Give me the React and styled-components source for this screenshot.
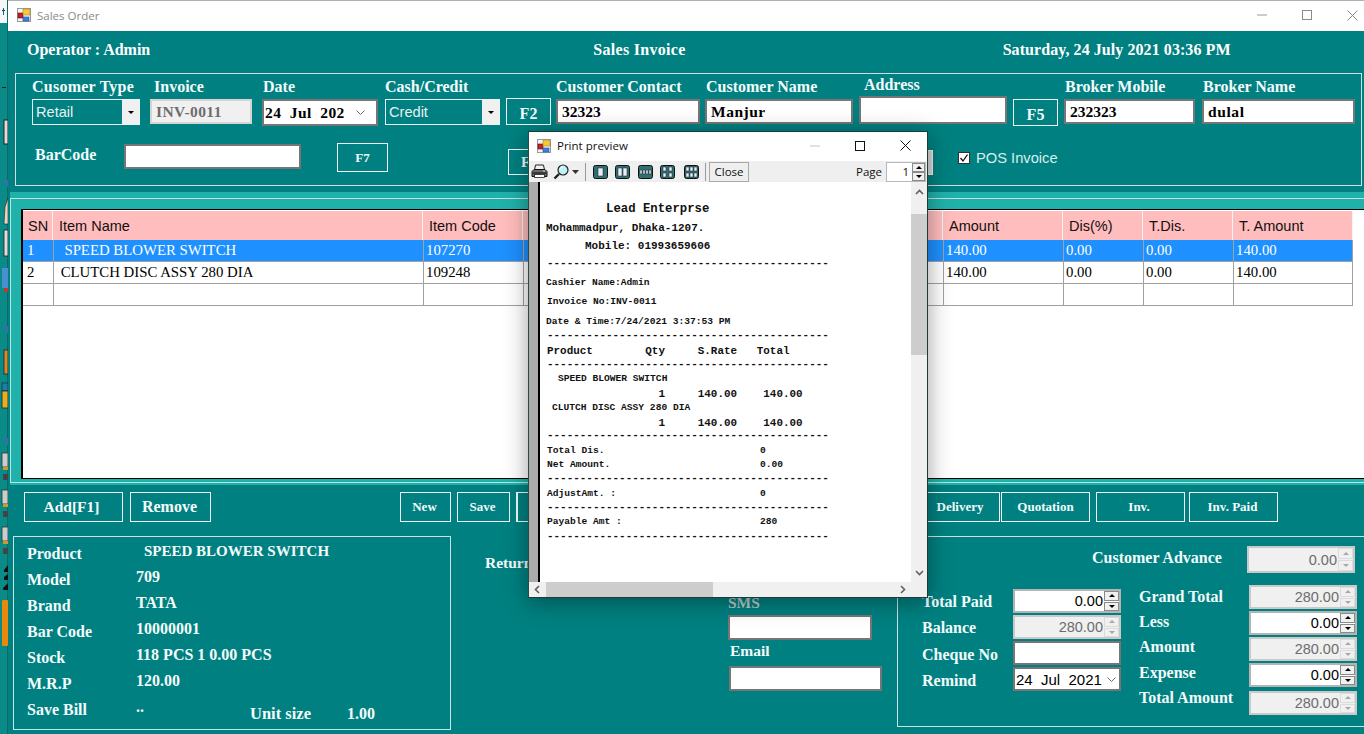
import React from 'react';
import styled, { createGlobalStyle } from 'styled-components';

const GlobalStyle = createGlobalStyle`
  html, body { margin: 0; padding: 0; background: #008080; }
  * { box-sizing: border-box; }
`;

const SERIF = '"Liberation Serif", "Times New Roman", serif';
const SANS = '"Liberation Sans", Arial, sans-serif';
const UI = '"Open Sans", "Noto Sans", sans-serif';
const MONO = '"Liberation Mono", "Courier New", monospace';

const Screen = styled.div`
  position: relative;
  display: flex;
  width: 1364px;
  height: 734px;
  overflow: hidden;
  background: #008080;
`;

const DesktopStrip = styled.svg`
  flex: none;
  width: 8px;
  height: 734px;
`;

const Window = styled.div`
  flex: 1;
  min-width: 0;
  display: flex;
  flex-direction: column;
  background: #008080;
`;

const TitleBar = styled.div`
  flex: none;
  display: flex;
  align-items: center;
  height: 31px;
  padding: 0 0 2px 9px;
  background: #fff;
  border-top: 1px solid #b0b0b0;
`;

const TitleText = styled.span`
  margin-left: ${p => p.$ml || 5}px;
  font: 11.5px ${UI};
  color: ${p => p.$dark ? '#111' : '#8a8a8a'};
`;

const WindowControls = styled.div`
  display: flex;
  align-items: center;
  margin-left: auto;
  gap: ${p => p.$gap}px;
  padding-right: ${p => p.$right}px;
`;

const HeaderRow = styled.div`
  flex: none;
  display: flex;
  align-items: center;
  height: 42px;
  padding-bottom: 5px;
  font: bold 16px ${SERIF};
  color: #fff;
`;

const HeaderText = styled.span`
  margin-left: ${p => p.$ml}px;
  letter-spacing: ${p => p.$ls || 0}px;
  white-space: nowrap;
`;

const TopPanel = styled.div`
  flex: none;
  width: 1347px;
  height: 113px;
  margin-left: 7px;
  border: 1px solid #d0dede;
`;

const FieldRow = styled.div`
  display: flex;
  align-items: flex-start;
  height: 52px;
`;

const SecondRow = styled.div`
  display: flex;
  align-items: flex-start;
  height: 32px;
  margin-top: 17px;
`;

const Field = styled.div`
  flex: none;
  width: ${p => p.$w}px;
  margin-left: ${p => p.$ml}px;
`;

const FieldLabel = styled.div`
  height: ${p => p.$h || 25}px;
  padding-left: ${p => p.$pl || 0}px;
  font: bold 16px/${p => p.$h || 25}px ${SERIF};
  letter-spacing: ${p => p.$ls || 0}px;
  color: #f2fbfb;
  white-space: nowrap;
`;

const InlineLabel = styled.div`
  flex: none;
  width: ${p => p.$w}px;
  height: 24px;
  margin-left: ${p => p.$ml}px;
  font: bold 16px/24px ${SERIF};
  color: #f2fbfb;
`;

const TextBox = styled.div`
  display: flex;
  align-items: center;
  flex: none;
  width: ${p => p.$w ? `${p.$w}px` : '100%'};
  height: ${p => p.$h || 25}px;
  margin: ${p => p.$mt || 0}px 0 0 ${p => p.$ml || 0}px;
  padding-left: ${p => p.$pl || 4}px;
  background: ${p => p.$disabled ? '#f0f0f0' : '#fff'};
  border: 2px solid ${p => p.$disabled ? '#d4d4d4' : '#767676'};
  color: ${p => p.$disabled ? '#6d6d6d' : '#000'};
  font: bold 15.5px ${SERIF};
  letter-spacing: ${p => p.$ls || 0}px;
  white-space: nowrap;
`;

const DateBox = styled(TextBox)`
  justify-content: space-between;
  padding: 0 ${p => p.$pr || 10}px 0 1px;
  font: ${p => p.$plain ? `15px ${SANS}` : `bold 15.5px ${SERIF}`};
  white-space: pre;
`;

const ComboBox = styled.div`
  display: flex;
  align-items: stretch;
  height: 26px;
  border: 1px solid #e8f5f5;
  background: #008080;
  color: #e6f2f2;
  font: 14.6px ${SANS};
`;

const ComboText = styled.div`
  flex: 1;
  display: flex;
  align-items: center;
  padding-left: 3px;
`;

const ComboArrow = styled.div`
  flex: none;
  display: flex;
  align-items: center;
  justify-content: center;
  width: 17px;
  background: #f0f0f0;
  &::after {
    content: '';
    border: 3px solid transparent;
    border-top: 3px solid #000;
    border-bottom: 0;
  }
`;

const OutlineButton = styled.div`
  flex: none;
  display: flex;
  align-items: center;
  justify-content: ${p => p.$pl ? 'flex-start' : 'center'};
  align-self: ${p => p.$end ? 'flex-end' : 'auto'};
  width: ${p => p.$w}px;
  height: ${p => p.$h}px;
  margin-left: ${p => p.$ml || 0}px;
  border: 1px solid #f0fafa;
  border-left-width: ${p => p.$thick ? 2 : 1}px;
  color: #f4fbfb;
  font: bold ${p => p.$size || 13}px ${SERIF};
  padding: ${p => p.$pt || 0}px ${p => p.$pr || 0}px 0 ${p => p.$pl || 0}px;
  white-space: nowrap;
`;

const HiddenGrayButton = styled.div`
  flex: none;
  align-self: flex-end;
  width: 50px;
  height: 25px;
  margin-left: 325px;
  background: #d9d9d9;
  border: 1px solid #eee;
`;

const CheckLabel = styled.label`
  display: flex;
  align-items: center;
  gap: 6px;
  height: 29px;
  margin-left: 25px;
  font: 14.7px ${SANS};
  color: #d9eeee;
`;

const CheckMark = styled.span`
  display: flex;
  align-items: center;
  justify-content: center;
  width: 12px;
  height: 12px;
  background: #fff;
  border: 1px solid #333;
`;

const LightStrip = styled.div`
  flex: none;
  height: 293px;
  margin: 6px 0 0 2px;
  padding-top: 6px;
  background: #20b2aa;
`;

const StripInner = styled.div`
  height: 285px;
  padding: 10px 0 0 10px;
  border-top: 1px solid #b8e6e2;
  border-left: 1px solid #b8e6e2;
  border-bottom: 1px solid #b8e6e2;
`;

const Grid = styled.div`
  height: 270px;
  padding-top: 1px;
  background: #fff;
  border: 1px solid #000;
  border-width: 1px 0 1px 2px;
  overflow: hidden;
`;

const COLUMNS = '30px 370px 100px 420px 120px 80px 90px 120px';

const HeadRow = styled.div`
  display: grid;
  grid-template-columns: ${COLUMNS};
  width: 1330px;
  height: 29px;
  background: #ffbdbd;
  font: 14.5px ${SANS};
  color: #111;
`;

const HeadCell = styled.div`
  display: flex;
  align-items: center;
  padding-left: ${p => p.$pl || 6}px;
  border-right: 1px solid #f4f4f4;
  white-space: nowrap;
`;

const DataRow = styled.div`
  display: grid;
  grid-template-columns: ${COLUMNS};
  width: 1330px;
  height: 22px;
  background: ${p => p.$selected ? '#1e90ff' : '#fff'};
  color: ${p => p.$selected ? '#fff' : '#000'};
  border-bottom: 1px solid #a0a0a0;
  border-right: 1px solid #a0a0a0;
  font: 14.8px ${SERIF};
`;

const DataCell = styled.div`
  display: flex;
  align-items: center;
  padding-left: ${p => p.$pl}px;
  border-left: ${p => p.$first ? 0 : 1}px solid #a0a0a0;
  white-space: pre;
`;

const ButtonRow = styled.div`
  flex: none;
  display: flex;
  align-items: flex-start;
  height: 44px;
  margin-top: 7px;
`;

const BottomArea = styled.div`
  flex: 1;
  display: flex;
  align-items: flex-start;
  min-height: 0;
`;

const ProductPanel = styled.div`
  flex: none;
  width: 438px;
  height: 194px;
  margin-left: 5px;
  padding: 3px 0 0 13px;
  border: 1px solid #c8e4e4;
`;

const InfoRow = styled.div`
  display: flex;
  height: 26px;
  font: bold 16px ${SERIF};
  color: #f4fbfb;
  white-space: nowrap;
`;

const InfoLabel = styled.div`
  flex: none;
  width: 109px;
  line-height: 28px;
`;

const InfoValue = styled.div`
  flex: none;
  width: ${p => p.$w ? `${p.$w}px` : 'auto'};
  margin-left: ${p => p.$ml || 0}px;
  font-size: ${p => p.$size || 16}px;
  line-height: 22px;
`;

const UnitText = styled.div`
  flex: none;
  width: ${p => p.$w ? `${p.$w}px` : 'auto'};
  font-size: ${p => p.$size || 16}px;
  line-height: 36px;
`;

const MiddleColumn = styled.div`
  flex: none;
  width: 446px;
  display: flex;
  flex-direction: column;
  padding-top: 18px;
`;

const MiddleLabel = styled.div`
  height: ${p => p.$h}px;
  margin: ${p => p.$mt || 0}px 0 0 ${p => p.$ml}px;
  font: bold 15.5px/${p => p.$h}px ${SERIF};
  color: ${p => p.$dim ? '#b5cccc' : '#f4fbfb'};
`;

const TotalsPanel = styled.div`
  flex: none;
  width: 480px;
  height: 191px;
  padding-top: 9px;
  border: 1px solid #c8e4e4;
`;

const AdvanceRow = styled.div`
  display: flex;
  align-items: center;
  padding-left: 194px;
`;

const TotalsColumns = styled.div`
  display: flex;
  align-items: flex-start;
  margin-top: 12px;
`;

const TotalsColumn = styled.div`
  display: flex;
  flex-direction: column;
  margin: ${p => p.$mt || 0}px 0 0 ${p => p.$ml}px;
`;

const TotalsRow = styled.div`
  display: flex;
  align-items: center;
  height: 24px;
  margin-bottom: ${p => p.$mb ?? 2}px;
`;

const TotalsLabel = styled.div`
  flex: none;
  width: ${p => p.$w}px;
  padding: ${p => p.$drop || 0}px 0 ${p => p.$lift || 0}px 0;
  font: bold 16px ${SERIF};
  color: #f2fbfb;
  white-space: nowrap;
`;

const SpinBox = styled.div`
  flex: none;
  display: flex;
  width: 108px;
  height: ${p => p.$h || 24}px;
  background: ${p => p.$disabled ? '#f0f0f0' : '#fff'};
  border: 2px solid ${p => p.$disabled ? '#c9c9c9' : '#b4b4b4'};
  color: ${p => p.$disabled ? '#6d6d6d' : '#000'};
`;

const SpinValue = styled.div`
  flex: 1;
  display: flex;
  align-items: center;
  justify-content: flex-end;
  padding-right: 1px;
  font: 14.5px ${SANS};
`;

const SpinButtons = styled.div`
  flex: none;
  width: 15px;
  display: flex;
  flex-direction: column;
  gap: 1px;
`;

const SpinArrow = styled.div`
  flex: 1;
  display: flex;
  align-items: center;
  justify-content: center;
  background: #f0f0f0;
  border: 1px solid ${p => p.$disabled ? '#dcdcdc' : '#8a8a8a'};
  &::after {
    content: '';
    border: 3px solid transparent;
    border-bottom: 3px solid ${p => p.$disabled ? '#a8a8a8' : '#000'};
    border-top: 0;
    transform: ${p => p.$down ? 'rotate(180deg)' : 'none'};
  }
`;

// print preview sits on top of the order form
const PreviewDialog = styled.div`
  position: absolute;
  left: 528px;
  top: 131px;
  width: 400px;
  height: 467px;
  display: flex;
  flex-direction: column;
  background: #f0f0f0;
  border: 1px solid #1c3c3c;
  border-left-color: #2a4a4a;
  box-shadow: 0 4px 22px rgba(0, 0, 0, 0.38);
`;

const PreviewTitle = styled.div`
  flex: none;
  display: flex;
  align-items: center;
  height: 29px;
  padding: 0 0 2px 8px;
  background: #fff;
`;

const PreviewToolbar = styled.div`
  flex: none;
  display: flex;
  align-items: center;
  height: 21px;
  padding-left: 2px;
  background: #efefef;
`;

const ToolIcon = styled.svg`
  flex: none;
  display: block;
  margin-left: ${p => p.$ml || 0}px;
`;

const ToolSeparator = styled.span`
  flex: none;
  width: 1px;
  height: 18px;
  margin-left: ${p => p.$ml}px;
  background: #9a9a9a;
`;

const CloseButton = styled.div`
  flex: none;
  width: 40px;
  height: 20px;
  margin-left: 3px;
  border: 1px solid #a8a8a8;
  font: 11.5px/18px ${UI};
  color: #111;
  text-align: center;
`;

const PageText = styled.span`
  margin-left: auto;
  font: 11.5px ${UI};
  color: #111;
`;

const PageSpin = styled.div`
  flex: none;
  display: flex;
  width: 40px;
  height: 20px;
  margin: 0 1px 0 4px;
  background: #fff;
  border: 1px solid #b8b8b8;
  font: 11.5px/18px ${UI};
  color: #111;
`;

const PageNumber = styled.span`
  flex: 1;
  padding-right: 3px;
  text-align: right;
`;

const PageSpinButtons = styled.div`
  flex: none;
  width: 13px;
  display: flex;
  flex-direction: column;
`;

const PreviewBody = styled.div`
  flex: 1;
  min-height: 0;
  display: flex;
`;

const PreviewGutter = styled.div`
  flex: none;
  width: 9px;
  background: #ababab;
`;

const PreviewPage = styled.div`
  flex: 1;
  min-width: 0;
  background: #fff;
  border-left: 2px solid #000;
  overflow: hidden;
  padding-top: 21px;
`;

const ReceiptLine = styled.div`
  height: 12px;
  margin-top: ${p => p.$gap}px;
  padding-left: ${p => p.$x}px;
  font: bold ${p => p.$size}px/12px ${MONO};
  color: #111;
  white-space: pre;
`;

const VScroll = styled.div`
  flex: none;
  width: 16px;
  display: flex;
  flex-direction: column;
  align-items: center;
  background: #f0f0f0;
`;

const VThumb = styled.div`
  width: 100%;
  height: 141px;
  margin-top: 19px;
  background: #cdcdcd;
`;

const ScrollIcon = styled.svg`
  flex: none;
  display: block;
  margin-top: ${p => p.$mt || 0}px;
  margin-left: ${p => p.$ml || 0}px;
`;

const HScroll = styled.div`
  flex: none;
  display: flex;
  align-items: center;
  height: 15px;
  background: #f0f0f0;
`;

const HThumb = styled.div`
  flex: none;
  width: 167px;
  height: 100%;
  margin-left: 6px;
  background: #cdcdcd;
`;

const AppIcon = ({ size = 14 }) => (
  <svg width={size} height={size} viewBox="0 0 14 14" style={{ flex: 'none' }}>
    <rect x="0.5" y="0.5" width="13" height="13" fill="#f4f4f4" stroke="#9a9a9a" />
    <rect x="1" y="5" width="5" height="5" fill="#c62020" stroke="#601010" strokeWidth="0.6" />
    <rect x="6" y="1" width="7" height="6" fill="#f6c83c" stroke="#a88420" strokeWidth="0.6" />
    <rect x="6" y="9" width="6" height="4" fill="#3f7fe0" stroke="#2050a0" strokeWidth="0.6" />
  </svg>
);

const MinIcon = ({ color }) => (
  <svg width="10" height="2" viewBox="0 0 10 2" style={{ display: 'block' }}><rect y="0.5" width="10" height="1" fill={color} /></svg>
);
const MaxIcon = ({ color }) => (
  <svg width="10" height="10" viewBox="0 0 10 10" style={{ display: 'block' }}><rect x="0.5" y="0.5" width="9" height="9" fill="none" stroke={color} /></svg>
);
const XIcon = ({ color }) => (
  <svg width="11" height="11" viewBox="0 0 11 11" style={{ display: 'block' }}><path d="M0.5 0.5 L10.5 10.5 M10.5 0.5 L0.5 10.5" stroke={color} fill="none" /></svg>
);

const Chevron = () => (
  <svg width="9" height="5" viewBox="0 0 9 5" style={{ flex: 'none' }}><path d="M0.5 0.5 L4.5 4.5 L8.5 0.5" fill="none" stroke="#6a6a6a" /></svg>
);

const PrinterIcon = () => (
  <ToolIcon width="17" height="15" viewBox="0 0 17 15">
    <path d="M4.5 1 H12.5 L13.5 6 H3.5 Z" fill="#f0f0f0" stroke="#222" />
    <path d="M1 7.5 L3 5.5 H14 L16 7.5 V12.5 H1 Z" fill="#6c6c6c" stroke="#111" />
    <rect x="1.5" y="8" width="14" height="2" fill="#3a3a3a" />
    <rect x="3.5" y="10.5" width="10" height="3" fill="#fff" stroke="#222" strokeWidth="0.8" />
    <rect x="12" y="6.5" width="2" height="1" fill="#d8d8d8" />
  </ToolIcon>
);

const ZoomIcon = () => (
  <ToolIcon $ml={5} width="16" height="16" viewBox="0 0 16 16">
    <circle cx="10" cy="6" r="5" fill="#bdf2f6" stroke="#222" strokeWidth="1.2" />
    <path d="M6 10 L1.5 14.5" stroke="#222" strokeWidth="2.4" />
    <path d="M7 5 A3 3 0 0 1 10 3" stroke="#fff" fill="none" />
  </ToolIcon>
);

const Caret = () => (
  <ToolIcon $ml={3} width="7" height="4" viewBox="0 0 7 4"><path d="M0 0 H7 L3.5 4 Z" fill="#333" /></ToolIcon>
);

// page layout buttons, the rects are the little white pages
const LayoutIcon = ({ pages, ml }) => (
  <ToolIcon $ml={ml} width="15" height="14" viewBox="0 0 15 14">
    <rect x="0.5" y="0.5" width="14" height="13" rx="2" fill="#2f6f6f" stroke="#111" />
    {pages.map(([x, y, w, h], i) => (
      <rect key={i} x={x} y={y} width={w} height={h} fill="#e8eef4" stroke="#223" strokeWidth="0.5" />
    ))}
  </ToolIcon>
);

const PAGE_LAYOUTS = [
  { ml: 7, pages: [[5, 3, 5, 8]] },
  { ml: 7, pages: [[3, 3, 4, 8], [8, 3, 4, 8]] },
  { ml: 8, pages: [[2, 5, 2, 4], [5, 5, 2, 4], [8, 5, 2, 4], [11, 5, 2, 4]] },
  { ml: 7, pages: [[3, 2, 3, 4], [9, 2, 3, 4], [3, 8, 3, 4], [9, 8, 3, 4]] },
  { ml: 9, pages: [[2, 2, 3, 4], [6, 2, 3, 4], [10, 2, 3, 4], [2, 8, 3, 4], [6, 8, 3, 4], [10, 8, 3, 4]] },
];

const Spin = ({ value, disabled, h }) => (
  <SpinBox $disabled={disabled} $h={h}>
    <SpinValue>{value}</SpinValue>
    <SpinButtons>
      <SpinArrow $disabled={disabled} />
      <SpinArrow $disabled={disabled} $down />
    </SpinButtons>
  </SpinBox>
);

const Combo = ({ text }) => (
  <ComboBox>
    <ComboText>{text}</ComboText>
    <ComboArrow />
  </ComboBox>
);

const HEADINGS = [
  ['SN', 5], ['Item Name', 6], ['Item Code', 6], ['', 6], ['Amount', 6], ['Dis(%)', 6], ['T.Dis.', 6], ['T. Amount', 6],
];

const CELL_PAD = [4, 3, 2, 2, 2, 2, 2, 2];

const ROWS = [
  ['1', '  SPEED BLOWER SWITCH', '107270', '', '140.00', '0.00', '0.00', '140.00'],
  ['2', ' CLUTCH DISC ASSY 280 DIA', '109248', '', '140.00', '0.00', '0.00', '140.00'],
  ['', '', '', '', '', '', '', ''],
];

const PRODUCT_INFO = [
  ['Product', 'SPEED BLOWER SWITCH', 8, 15],
  ['Model', '709'],
  ['Brand', 'TATA'],
  ['Bar Code', '10000001'],
  ['Stock', '118 PCS 1 0.00 PCS'],
  ['M.R.P', '120.00'],
];

const DASHES = '-'.repeat(43);
const RULE = 10.93;

const RECEIPT = [
  { t: 'Lead Enterprse', s: 12.3, x: 66, y: 209 },
  { t: 'Mohammadpur, Dhaka-1207.', s: 11, x: 6, y: 228 },
  { t: 'Mobile: 01993659606', s: 11, x: 45, y: 246 },
  { t: DASHES, s: RULE, x: 7, y: 263 },
  { t: 'Cashier Name:Admin', s: 9.6, x: 6, y: 283 },
  { t: 'Invoice No:INV-0011', s: 9.6, x: 7, y: 302 },
  { t: 'Date & Time:7/24/2021 3:37:53 PM', s: 9.6, x: 6, y: 322 },
  { t: DASHES, s: RULE, x: 7, y: 335 },
  { t: 'Product        Qty     S.Rate   Total', s: RULE, x: 7, y: 351 },
  { t: DASHES, s: RULE, x: 7, y: 364 },
  { t: 'SPEED BLOWER SWITCH', s: 9.6, x: 18, y: 379 },
  { t: `${' '.repeat(17)}1     140.00    140.00`, s: RULE, x: 7, y: 394 },
  { t: 'CLUTCH DISC ASSY 280 DIA', s: 9.6, x: 12, y: 408 },
  { t: `${' '.repeat(17)}1     140.00    140.00`, s: RULE, x: 7, y: 423 },
  { t: DASHES, s: RULE, x: 7, y: 435 },
  { t: `Total Dis.${' '.repeat(27)}0`, s: 9.6, x: 7, y: 451 },
  { t: `Net Amount.${' '.repeat(26)}0.00`, s: 9.6, x: 7, y: 465 },
  { t: DASHES, s: RULE, x: 7, y: 478 },
  { t: `AdjustAmt. :${' '.repeat(25)}0`, s: 9.6, x: 7, y: 494 },
  { t: DASHES, s: RULE, x: 7, y: 507 },
  { t: `Payable Amt :${' '.repeat(24)}280`, s: 9.6, x: 7, y: 522 },
  { t: DASHES, s: RULE, x: 7, y: 536 },
];

export default function App() {
  return (
    <Screen>
      <GlobalStyle />
      <DesktopStrip viewBox="0 0 8 734">
        <rect width="8" height="734" fill="#0b8b88" />
        <rect width="8" height="23" fill="#f6f6f6" />
        <rect x="7" width="1" height="734" fill="#0a6a68" />
        <rect x="2" y="10" width="3" height="1" fill="#222" />
        <rect x="3" y="8" width="1" height="7" fill="#2a5a9a" />
        <rect x="2" y="87" width="4" height="1" fill="#222" />
        <rect x="4" y="120" width="4" height="24" fill="#ddd" stroke="#222" />
        <path d="M3 180 H8 V188 Z" fill="#3a6ea8" />
        <path d="M5 207 L8 198 V224 H4 Z" fill="#e8d8c0" stroke="#222" strokeWidth="0.6" />
        <rect x="4" y="230" width="4" height="26" fill="#ddd" stroke="#222" strokeWidth="0.8" />
        <rect x="2" y="268" width="6" height="20" fill="#4a8fd0" />
        <rect x="4" y="288" width="4" height="4" fill="#c0392b" />
        <path d="M3 326 H8 V334 Z" fill="#3a6ea8" />
        <rect x="4" y="350" width="4" height="24" fill="#d58a2a" stroke="#222" strokeWidth="0.8" />
        <rect x="2" y="383" width="6" height="8" fill="#1a7ea8" stroke="#222" strokeWidth="0.6" />
        <rect x="2" y="391" width="6" height="17" fill="#e2b020" stroke="#222" strokeWidth="0.8" />
        <path d="M3 438 H8 V446 Z" fill="#3a6ea8" />
        <rect x="2" y="453" width="6" height="14" fill="#ccc" stroke="#333" strokeWidth="0.8" />
        <rect x="3" y="467" width="5" height="3" fill="#d09a20" />
        <rect x="3" y="474" width="5" height="6" fill="#444" />
        <rect x="2" y="490" width="6" height="14" fill="#ccc" stroke="#333" strokeWidth="0.8" />
        <rect x="3" y="504" width="5" height="3" fill="#d09a20" />
        <rect x="3" y="511" width="5" height="6" fill="#444" />
        <rect x="2" y="527" width="6" height="14" fill="#ccc" stroke="#333" strokeWidth="0.8" />
        <rect x="3" y="541" width="5" height="3" fill="#d09a20" />
        <rect x="3" y="548" width="5" height="6" fill="#444" />
        <path d="M4 570 L8 565 V572 H4 Z M4 577 L8 574 V580 H4 Z M3 588 L8 583 V590 H3 Z" fill="#111" />
        <rect x="2" y="600" width="6" height="46" rx="1" fill="#e8890c" />
      </DesktopStrip>

      <Window>
        <TitleBar>
          <AppIcon />
          <TitleText $ml={6}>Sales Order</TitleText>
          <WindowControls $gap={35} $right={6}>
            <MinIcon color="#9a9a9a" />
            <MaxIcon color="#8a8a8a" />
            <XIcon color="#8a8a8a" />
          </WindowControls>
        </TitleBar>

        <HeaderRow>
          <HeaderText $ml={19}>Operator : Admin</HeaderText>
          <HeaderText $ml={443} $ls={0.3}>Sales Invoice</HeaderText>
          <HeaderText $ml={317} $ls={0.07}>Saturday, 24 July 2021 03:36 PM</HeaderText>
        </HeaderRow>

        <TopPanel>
          <FieldRow>
            <Field $w={108} $ml={16}>
              <FieldLabel $ls={0.25}>Cusomer Type</FieldLabel>
              <Combo text="Retail" />
            </Field>
            <Field $w={102} $ml={10}>
              <FieldLabel $pl={4}>Invoice</FieldLabel>
              <TextBox $disabled $ls={0.4}>INV-0011</TextBox>
            </Field>
            <Field $w={116} $ml={10}>
              <FieldLabel $pl={1}>Date</FieldLabel>
              <DateBox $h={27} $ls={0.4} $pr={11}>24  Jul  202<Chevron /></DateBox>
            </Field>
            <Field $w={115} $ml={7}>
              <FieldLabel>Cash/Credit</FieldLabel>
              <Combo text="Credit" />
            </Field>
            <Field $w={45} $ml={6}>
              <FieldLabel $h={24} />
              <OutlineButton $w={45} $h={27} $size={16} $pt={4}>F2</OutlineButton>
            </Field>
            <Field $w={144} $ml={5}>
              <FieldLabel>Customer Contact</FieldLabel>
              <TextBox>32323</TextBox>
            </Field>
            <Field $w={148} $ml={5}>
              <FieldLabel $pl={1}>Customer Name</FieldLabel>
              <TextBox $ls={0.5}>Manjur</TextBox>
            </Field>
            <Field $w={148} $ml={6}>
              <FieldLabel $h={22} $pl={5}>Address</FieldLabel>
              <TextBox $h={28} />
            </Field>
            <Field $w={45} $ml={6}>
              <FieldLabel />
              <OutlineButton $w={45} $h={27} $size={16} $pt={4}>F5</OutlineButton>
            </Field>
            <Field $w={131} $ml={6}>
              <FieldLabel $pl={1}>Broker Mobile</FieldLabel>
              <TextBox>232323</TextBox>
            </Field>
            <Field $w={153} $ml={7}>
              <FieldLabel $pl={1}>Broker Name</FieldLabel>
              <TextBox $ls={0.6}>dulal</TextBox>
            </Field>
          </FieldRow>
          <SecondRow>
            <InlineLabel $w={89} $ml={19}>BarCode</InlineLabel>
            <TextBox $w={177} $h={25} $mt={1} />
            <OutlineButton $w={51} $h={29} $ml={36} $size={13}>F7</OutlineButton>
            <OutlineButton $w={50} $h={26} $ml={120} $size={15} $pl={12} $end>F</OutlineButton>
            <HiddenGrayButton />
            <CheckLabel>
              <CheckMark>
                <svg width="10" height="10" viewBox="0 0 10 10"><path d="M1.5 5 L4 8 L8.5 1.5" fill="none" stroke="#111" strokeWidth="1.3" /></svg>
              </CheckMark>
              POS Invoice
            </CheckLabel>
          </SecondRow>
        </TopPanel>

        <LightStrip>
          <StripInner>
            <Grid>
              <HeadRow>
                {HEADINGS.map(([label, pl], i) => <HeadCell key={i} $pl={pl}>{label}</HeadCell>)}
              </HeadRow>
              {ROWS.map((row, r) => (
                <DataRow key={r} $selected={r === 0}>
                  {row.map((cell, c) => <DataCell key={c} $first={c === 0} $pl={CELL_PAD[c]}>{cell}</DataCell>)}
                </DataRow>
              ))}
            </Grid>
          </StripInner>
        </LightStrip>

        <ButtonRow>
          <OutlineButton $w={99} $h={30} $ml={16} $size={15.5} $pr={4}>Add[F1]</OutlineButton>
          <OutlineButton $w={81} $h={30} $ml={7} $size={16} $pr={2}>Remove</OutlineButton>
          <OutlineButton $w={51} $h={30} $ml={189} $pr={2}>New</OutlineButton>
          <OutlineButton $w={53} $h={30} $ml={6} $pr={2}>Save</OutlineButton>
          <OutlineButton $w={80} $h={30} $ml={6} $thick />
          <OutlineButton $w={80} $h={30} $ml={324}>Delivery</OutlineButton>
          <OutlineButton $w={89} $h={30} $ml={1}>Quotation</OutlineButton>
          <OutlineButton $w={89} $h={30} $ml={6} $pr={3}>Inv.</OutlineButton>
          <OutlineButton $w={89} $h={30} $ml={4} $pr={2}>Inv. Paid</OutlineButton>
        </ButtonRow>

        <BottomArea>
          <ProductPanel>
            {PRODUCT_INFO.map(([label, value, ml, size]) => (
              <InfoRow key={label}>
                <InfoLabel>{label}</InfoLabel>
                <InfoValue $ml={ml} $size={size}>{value}</InfoValue>
              </InfoRow>
            ))}
            <InfoRow>
              <InfoLabel>Save Bill</InfoLabel>
              <InfoValue $w={114}>..</InfoValue>
              <UnitText $w={97} $size={16.5}>Unit size</UnitText>
              <UnitText>1.00</UnitText>
            </InfoRow>
          </ProductPanel>

          <MiddleColumn>
            <MiddleLabel $h={18} $ml={34}>Return</MiddleLabel>
            <MiddleLabel $h={20} $mt={21} $ml={277} $dim>SMS</MiddleLabel>
            <TextBox $w={144} $ml={277} $mt={2} />
            <MiddleLabel $h={22} $ml={279}>Email</MiddleLabel>
            <TextBox $w={153} $ml={278} $mt={4} />
          </MiddleColumn>

          <TotalsPanel>
            <AdvanceRow>
              <TotalsLabel $w={155} $lift={4}>Customer Advance</TotalsLabel>
              <Spin value="0.00" disabled h={27} />
            </AdvanceRow>
            <TotalsColumns>
              <TotalsColumn $ml={24} $mt={4}>
                <TotalsRow><TotalsLabel $w={91} $drop={2}>Total Paid</TotalsLabel><Spin value="0.00" /></TotalsRow>
                <TotalsRow><TotalsLabel $w={91} $drop={2}>Balance</TotalsLabel><Spin value="280.00" disabled /></TotalsRow>
                <TotalsRow><TotalsLabel $w={91} $drop={4}>Cheque No</TotalsLabel><TextBox $w={108} $h={24} /></TotalsRow>
                <TotalsRow>
                  <TotalsLabel $w={91} $drop={4}>Remind</TotalsLabel>
                  <DateBox $w={108} $h={24} $plain $pr={3}>24  Jul  2021<Chevron /></DateBox>
                </TotalsRow>
              </TotalsColumn>
              <TotalsColumn $ml={18}>
                <TotalsRow><TotalsLabel $w={110}>Grand Total</TotalsLabel><Spin value="280.00" disabled /></TotalsRow>
                <TotalsRow><TotalsLabel $w={110} $lift={2}>Less</TotalsLabel><Spin value="0.00" /></TotalsRow>
                <TotalsRow><TotalsLabel $w={110} $lift={4}>Amount</TotalsLabel><Spin value="280.00" disabled /></TotalsRow>
                <TotalsRow $mb={4}><TotalsLabel $w={110} $lift={4}>Expense</TotalsLabel><Spin value="0.00" /></TotalsRow>
                <TotalsRow><TotalsLabel $w={110} $lift={10}>Total Amount</TotalsLabel><Spin value="280.00" disabled /></TotalsRow>
              </TotalsColumn>
            </TotalsColumns>
          </TotalsPanel>
        </BottomArea>
      </Window>

      <PreviewDialog>
        <PreviewTitle>
          <AppIcon />
          <TitleText $dark $ml={6}>Print preview</TitleText>
          <WindowControls $gap={35} $right={16}>
            <MinIcon color="#c4c4c4" />
            <MaxIcon color="#111" />
            <XIcon color="#111" />
          </WindowControls>
        </PreviewTitle>
        <PreviewToolbar>
          <PrinterIcon />
          <ZoomIcon />
          <Caret />
          <ToolSeparator $ml={6} />
          {PAGE_LAYOUTS.map((layout, i) => <LayoutIcon key={i} ml={layout.ml} pages={layout.pages} />)}
          <ToolSeparator $ml={6} />
          <CloseButton>Close</CloseButton>
          <PageText>Page</PageText>
          <PageSpin>
            <PageNumber>1</PageNumber>
            <PageSpinButtons>
              <SpinArrow />
              <SpinArrow $down />
            </PageSpinButtons>
          </PageSpin>
        </PreviewToolbar>
        <PreviewBody>
          <PreviewGutter />
          <PreviewPage>
            {RECEIPT.map((line, i) => (
              <ReceiptLine
                key={i}
                $gap={i === 0 ? 0 : line.y - RECEIPT[i - 1].y - 12}
                $size={line.s}
                $x={line.x}
              >
                {line.t}
              </ReceiptLine>
            ))}
          </PreviewPage>
          <VScroll>
            <ScrollIcon $mt={7} width="9" height="6" viewBox="0 0 9 6"><path d="M1 5 L4.5 1.5 L8 5" fill="none" stroke="#606060" strokeWidth="1.6" /></ScrollIcon>
            <VThumb />
            <ScrollIcon $mt={215} width="9" height="6" viewBox="0 0 9 6"><path d="M1 1 L4.5 4.5 L8 1" fill="none" stroke="#606060" strokeWidth="1.6" /></ScrollIcon>
          </VScroll>
        </PreviewBody>
        <HScroll>
          <ScrollIcon $ml={5} width="6" height="9" viewBox="0 0 6 9"><path d="M5 1 L1.5 4.5 L5 8" fill="none" stroke="#606060" strokeWidth="1.6" /></ScrollIcon>
          <HThumb />
          <ScrollIcon $ml={187} width="6" height="9" viewBox="0 0 6 9"><path d="M1 1 L4.5 4.5 L1 8" fill="none" stroke="#606060" strokeWidth="1.6" /></ScrollIcon>
        </HScroll>
      </PreviewDialog>
    </Screen>
  );
}
